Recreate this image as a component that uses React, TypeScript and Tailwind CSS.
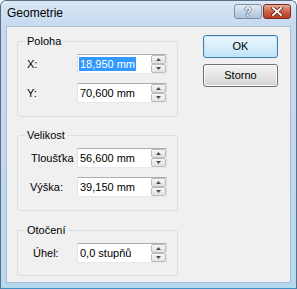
import React from 'react';

const font = "font-['Liberation_Sans',Arial,sans-serif]";

function Arrow({ up }: { up?: boolean }) {
  return (
    <svg width="5" height="3" viewBox="0 0 5 3">
      {up ? <path d="M0 3 L2.5 0 L5 3 Z" fill="#4a4d52" /> : <path d="M0 0 L2.5 3 L5 0 Z" fill="#4a4d52" />}
    </svg>
  );
}

function Spin() {
  return (
    <div className="flex flex-col w-[15px] h-[18px]">
      <div className="h-[9px] flex items-center justify-center border border-[#b8bcc3] rounded-[2px] bg-gradient-to-b from-[#f7f7f7] to-[#e0e0e0]">
        <Arrow up />
      </div>
      <div className="h-[9px] flex items-center justify-center border border-[#b8bcc3] rounded-[2px] bg-gradient-to-b from-[#f7f7f7] to-[#e0e0e0]">
        <Arrow />
      </div>
    </div>
  );
}

function Row({ label, labelPad, value, selected }: { label: string; labelPad: string; value: string; selected?: boolean }) {
  return (
    <div className="flex items-center h-[20px]">
      <div className={`w-[59px] ${labelPad} text-[11px] leading-[13px] text-black`}>{label}</div>
      <div className="w-[90px] h-[20px] flex border border-[#abadb3] border-l-[#e2e3ea] border-r-[#dbdfe6] border-b-[#e3e9ef] bg-white">
        <div className="flex-1 flex items-center pl-[1px] text-[11px] text-black">
          {selected ? (
            <span className="bg-[#3399ff] text-white px-[1px] leading-[14px]">{value}</span>
          ) : (
            <span className="px-[1px] leading-[14px]">{value}</span>
          )}
        </div>
        <Spin />
      </div>
    </div>
  );
}

function Group({ title, className, children }: { title: string; className?: string; children: React.ReactNode }) {
  return (
    <div className={`relative w-[161px] border border-[#d5dfe5] rounded-[3px] pt-[12px] ${className ?? ''}`}>
      <span className="absolute -top-[7px] left-[7px] px-[2px] bg-[#f0f0f0] text-[11px] leading-[13px] text-black">
        {title}
      </span>
      {children}
    </div>
  );
}

export default function App() {
  return (
    <div className={`w-[297px] h-[289px] ${font}`}>
      <div className="w-[297px] h-[289px] flex flex-col rounded-t-[6px] border border-[#5d6f84] border-b-[#3f8fc4] bg-gradient-to-b from-[#c6daef] via-[#c3d8ee] to-[#b4daf0]">
        {/* Title bar */}
        <div className="h-[25px] flex items-start pl-[6px] pr-[5px] rounded-t-[5px] bg-gradient-to-b from-[#dae7f5] to-[#c5d9ef]">
          <span className="mt-[5px] text-[12px] leading-[15px] text-black">Geometrie</span>
          <div className="ml-auto mt-[3px] flex gap-[1px]">
            <div className="w-[28px] h-[15px] flex items-center justify-center rounded-[3px] border border-[#7b90a8] bg-gradient-to-b from-[#e3ecf6] via-[#c6d6e8] to-[#aec3dc]">
              <span className="text-[12px] leading-[12px] font-bold text-white [text-shadow:0_0_1px_#2e425a,0_0_1px_#2e425a,0_0_1px_#2e425a]">?</span>
            </div>
            <div className="w-[28px] h-[15px] flex items-center justify-center rounded-[3px] border border-[#7a2a1c] bg-gradient-to-b from-[#e6a896] via-[#cf6148] to-[#b83c22]">
              <svg width="12" height="9" viewBox="0 0 12 9">
                <path d="M2 1 L10 8 M10 1 L2 8" stroke="#5a1a0e" strokeWidth="3.4" strokeLinecap="square" />
                <path d="M2 1 L10 8 M10 1 L2 8" stroke="#ffffff" strokeWidth="1.9" strokeLinecap="square" />
              </svg>
            </div>
          </div>
        </div>

        {/* Client area */}
        <div className="flex-1 mx-[5px] mb-[5px] border border-[#a9bdd3] bg-[#f0f0f0] flex">
          <div className="ml-[10px] mt-[14px] flex flex-col">
            <Group title="Poloha" className="h-[76px]">
              <Row label="X:" labelPad="pl-[9px]" value="18,950 mm" selected />
              <div className="h-[9px]" />
              <Row label="Y:" labelPad="pl-[9px]" value="70,600 mm" />
            </Group>
            <Group title="Velikost" className="h-[76px] mt-[18px]">
              <Row label="Tloušťka" labelPad="pl-[13px]" value="56,600 mm" />
              <div className="h-[9px]" />
              <Row label="Výška:" labelPad="pl-[12px]" value="39,150 mm" />
            </Group>
            <Group title="Otočení" className="h-[46px] mt-[19px]">
              <Row label="Úhel:" labelPad="pl-[15px]" value="0,0 stupňů" />
            </Group>
          </div>

          <div className="ml-[25px] mt-[8px] flex flex-col gap-[6px]">
            <button className="w-[75px] h-[23px] rounded-[3px] border border-[#3c7fb1] bg-gradient-to-b from-[#eaf6fd] via-[#d9eefa] to-[#bde3f7] shadow-[inset_0_0_0_1px_#c4e5f6] text-[11px] text-black">
              OK
            </button>
            <button className="w-[75px] h-[23px] rounded-[3px] border border-[#707070] bg-gradient-to-b from-[#f3f3f3] via-[#e6e6e6] to-[#d2d2d2] shadow-[inset_0_0_0_1px_#fbfbfb] text-[11px] text-black">
              Storno
            </button>
          </div>
        </div>
      </div>
    </div>
  );
}
